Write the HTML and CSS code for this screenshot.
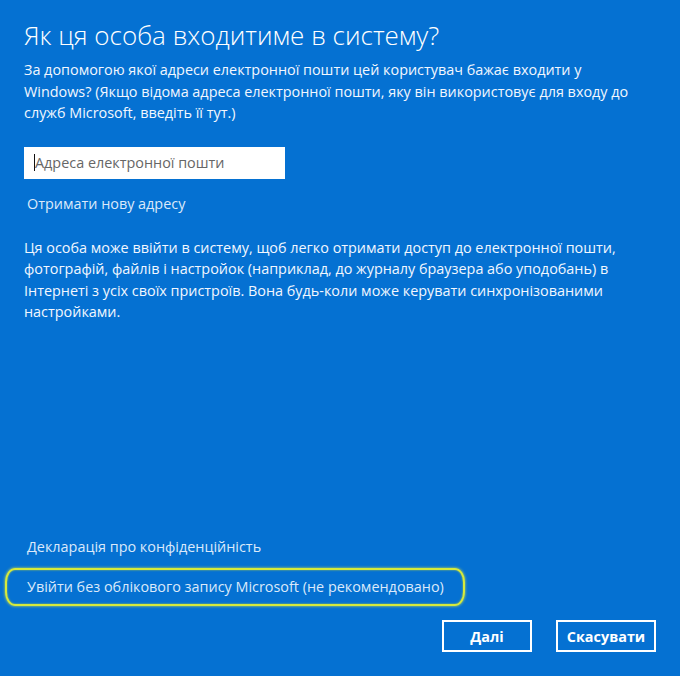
FILE: index.html
```html
<!DOCTYPE html>
<html lang="uk">
<head>
<meta charset="UTF-8">
<title>Обліковий запис Microsoft</title>
<link rel="stylesheet" href="styles.css">
</head>
<body>

<div class="dialog">
  <!-- Верхня частина -->
  <div class="content">
    <h1 class="title">Як ця особа входитиме в систему?</h1>
    <p class="text intro">За допомогою якої адреси електронної пошти цей користувач бажає входити у Windows? (Якщо відома адреса електронної пошти, яку він використовує для входу до служб Microsoft, введіть її тут.)</p>

    <div class="email-box">
      <span class="caret"></span><span class="placeholder">Адреса електронної пошти</span>
    </div>

    <a class="link new-address" href="#">Отримати нову адресу</a>

    <p class="text info">Ця особа може ввійти в систему, щоб легко отримати доступ до електронної пошти, фотографій, файлів і настройок (наприклад, до журналу браузера або уподобань) в Інтернеті з усіх своїх пристроїв. Вона будь-коли може керувати синхронізованими настройками.</p>
  </div>

  <!-- Нижня частина -->
  <div class="footer">
    <a class="link privacy" href="#">Декларація про конфіденційність</a>
    <div class="highlight">
      <a class="link" href="#">Увійти без облікового запису Microsoft (не рекомендовано)</a>
    </div>
    <div class="buttons">
      <button class="btn btn-next">Далі</button>
      <button class="btn btn-cancel">Скасувати</button>
    </div>
  </div>
</div>

</body>
</html>
```

FILE: styles.css
```css
/* Основний фон вікна */
body {
  margin: 0;
  padding: 0;
  background-color: #0571d2;
  color: #f2f7ff;
  font-family: "Segoe UI", "Open Sans", "Noto Sans", sans-serif;
}
.dialog {
  height: 676px;
  display: flex;
  flex-direction: column;
  justify-content: space-between;
  box-sizing: border-box;
}
.content {
  padding: 17px 24px 0 24px;
}
.title {
  margin: 0;
  font-size: 26px;
  font-weight: 300;
  line-height: 36px;
  color: #fff;
}
.text {
  margin: 6px 0 0 0;
  font-size: 14.4px;
  line-height: 21.5px;
  color: #f2f7ff;
}
.intro {
  max-width: 610px;
}
/* Поле для адреси */
.email-box {
  margin-top: 23px;
  width: 261px;
  height: 32px;
  background-color: #fff;
  display: flex;
  align-items: center;
  padding-left: 10px;
  box-sizing: border-box;
}
.caret {
  width: 1px;
  height: 17px;
  background-color: #111;
}
.placeholder {
  font-size: 14.4px;
  color: #666;
}
.link {
  display: inline-block;
  color: #dbe9fa;
  text-decoration: none;
  font-size: 14.4px;
  line-height: 20px;
}
.new-address {
  margin: 15px 0 0 3px;
}
.info {
  margin-top: 23px;
}
/* Нижня панель */
.footer {
  padding: 0 24px 24px 5px;
  display: flex;
  flex-direction: column;
}
.privacy {
  margin-left: 22px;
  align-self: flex-start;
}
.highlight {
  margin-top: 11px;
  width: 460px;
  height: 38px;
  box-sizing: border-box;
  border: 2px solid #d6ea3c;
  border-radius: 10px / 14px;
  box-shadow: 0 0 3px #cfe248, inset 0 0 2px #b8d03e;
  display: flex;
  align-items: center;
  padding-left: 20px;
}
.buttons {
  margin-top: 14px;
  display: flex;
  justify-content: flex-end;
  gap: 24px;
}
.btn {
  height: 32px;
  padding: 0;
  background-color: #0571d2;
  border: 2px solid #fff;
  color: #fff;
  font-family: "Segoe UI", "Open Sans", "Noto Sans", sans-serif;
  font-size: 14.4px;
  font-weight: bold;
  cursor: pointer;
}
.btn-next {
  width: 90px;
}
.btn-cancel {
  width: 100px;
}
```
